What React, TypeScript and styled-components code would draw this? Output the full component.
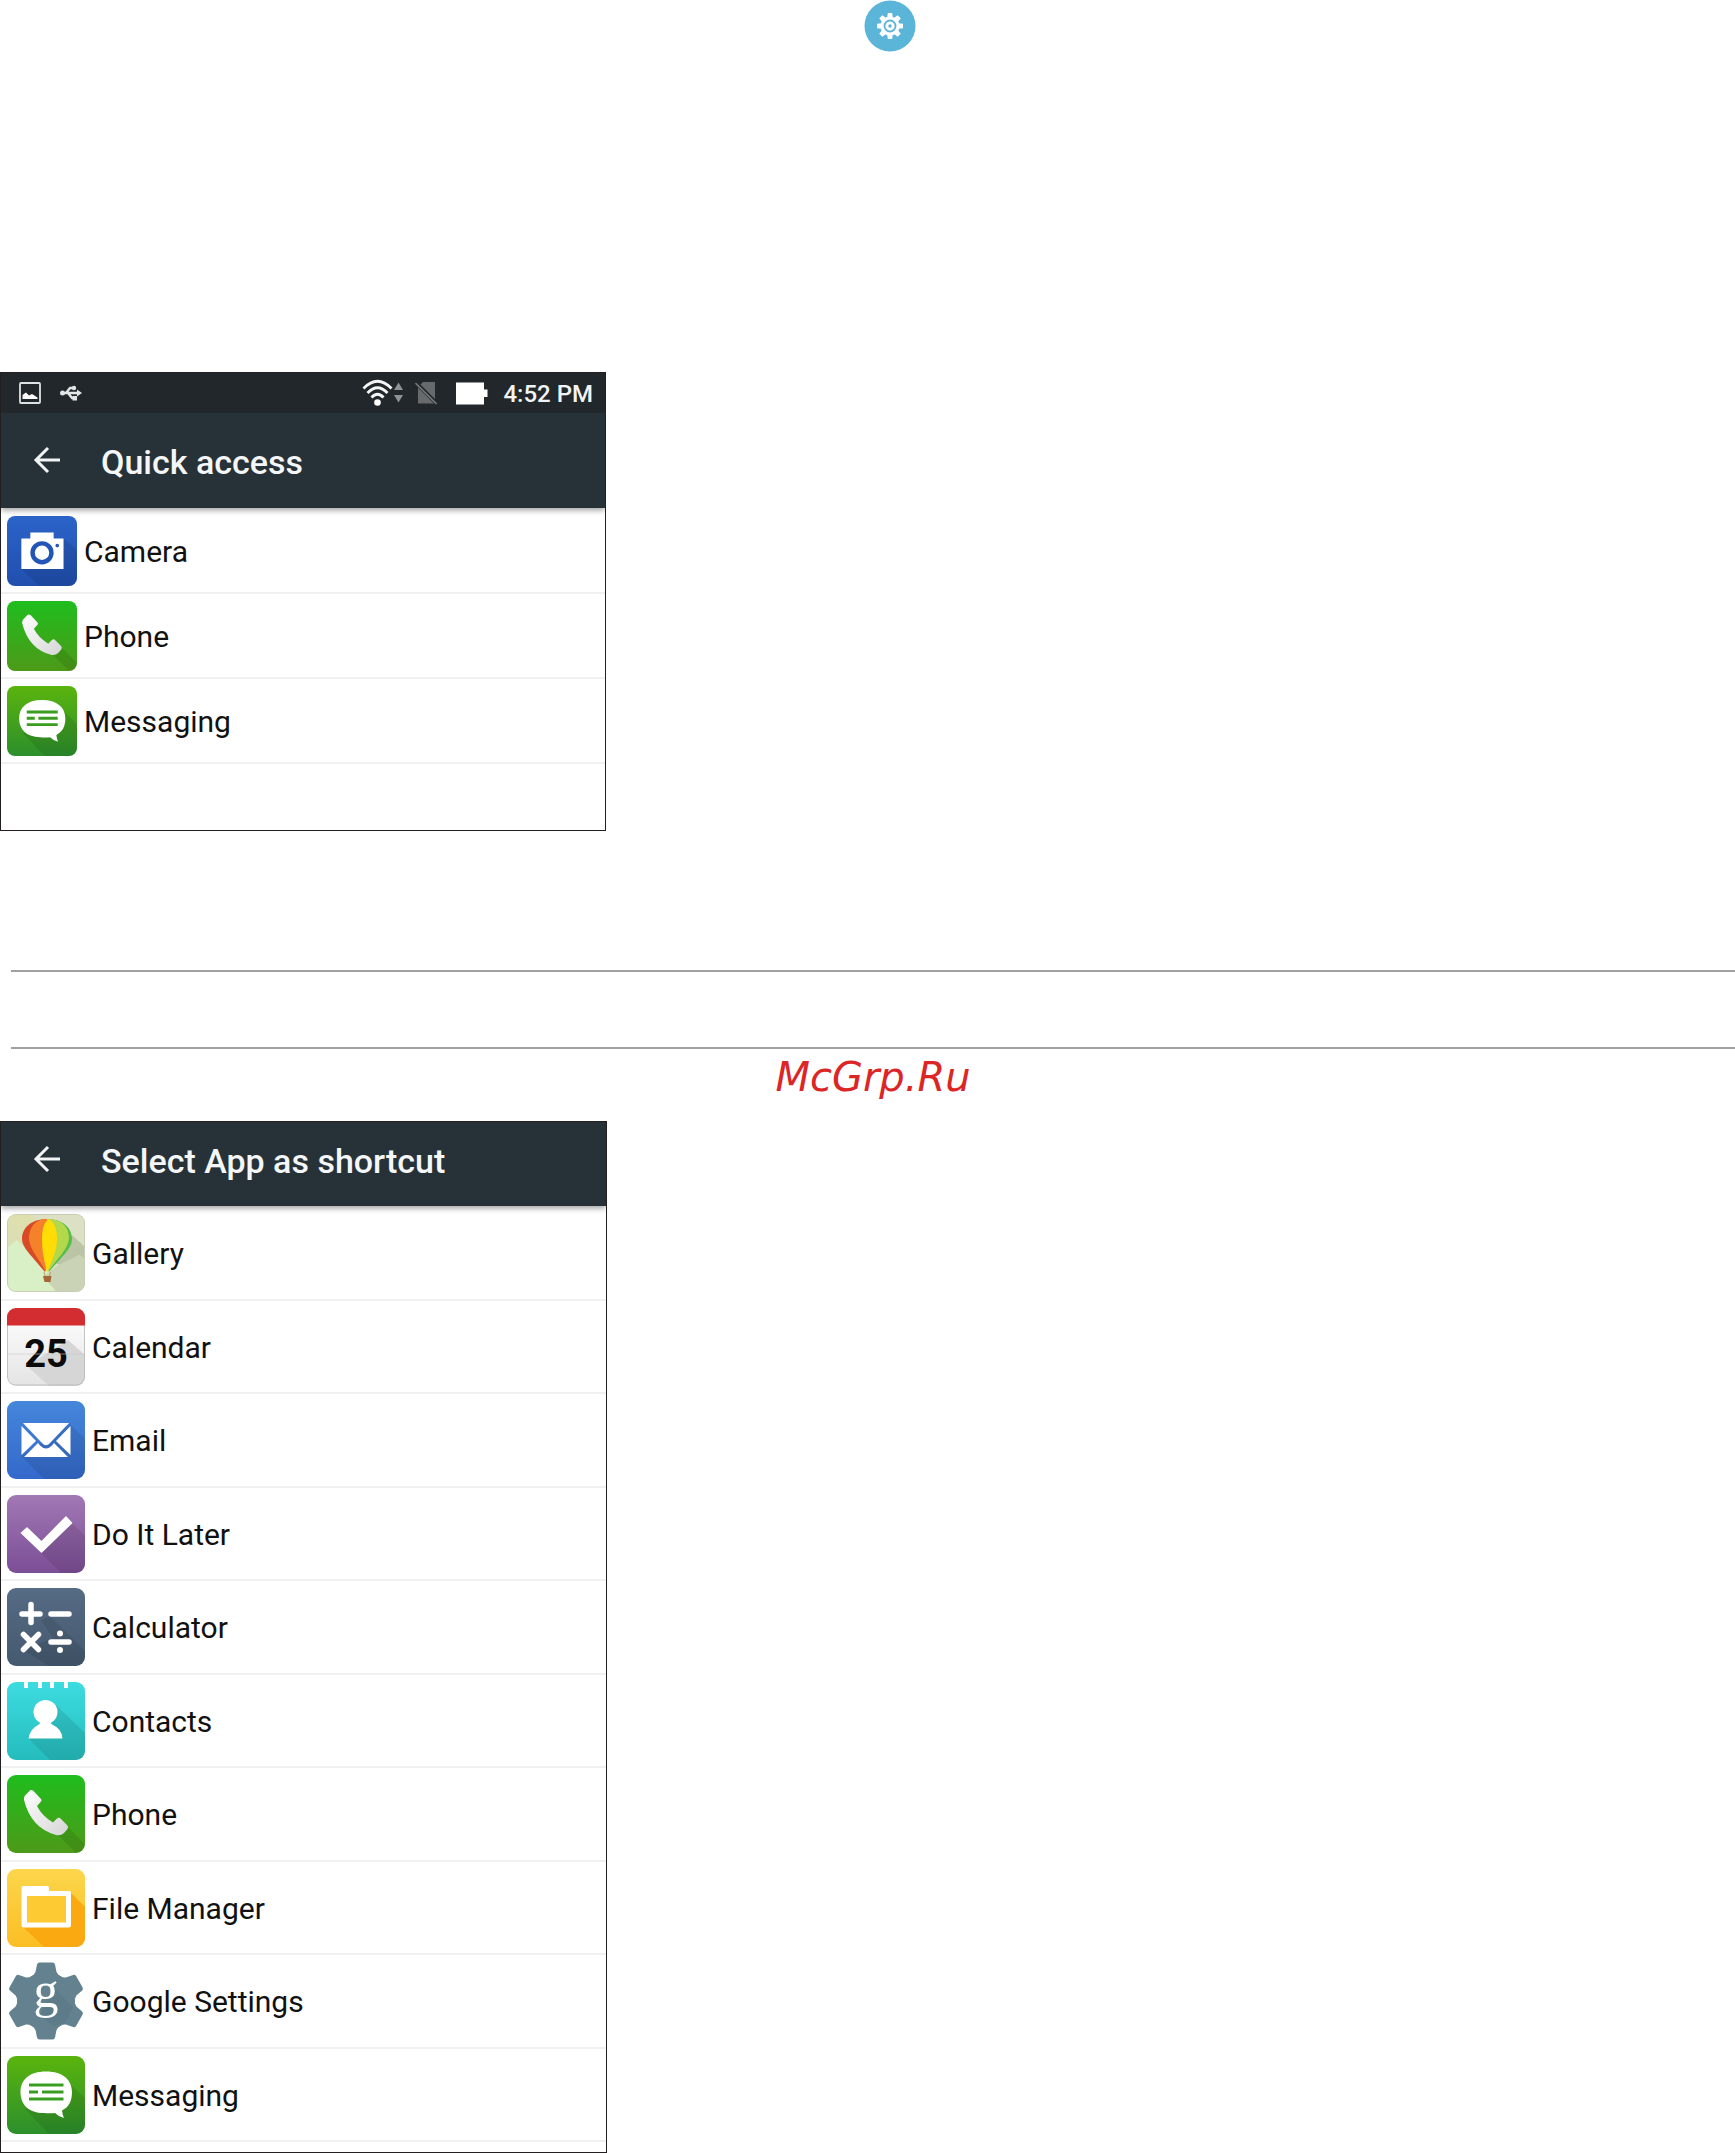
import React from 'react';
import styled, { createGlobalStyle } from 'styled-components';

const GlobalStyle = createGlobalStyle`
  *, *::before, *::after { box-sizing: border-box; }
  body {
    margin: 0;
    background: #ffffff;
    color: #111111;
    font-family: Roboto, "Noto Sans", "Liberation Sans", sans-serif;
  }
`;

const Page = styled.main`
  display: flex;
  flex-direction: column;
  width: 100%;
`;

const Hero = styled.header`
  display: flex;
  justify-content: center;
  padding: 0 0 320px 44px;

  svg { display: block; }
`;

const Screen = styled.section`
  display: flex;
  flex-direction: column;
  width: 100%;
  max-width: ${(p: { $wide?: boolean }) => (p.$wide ? 607 : 606)}px;
  border: 1px solid #231f20;
  background: #ffffff;
`;

const StatusBar = styled.div`
  display: flex;
  align-items: center;
  justify-content: space-between;
  height: 40px;
  padding: 0 12px 0 18px;
  background: #22272b;
  color: #f1f3f4;
`;

const StatusGroup = styled.div<{ $gap: number }>`
  display: flex;
  align-items: center;
  gap: ${p => p.$gap}px;

  svg { display: block; }
`;

const Signals = styled(StatusGroup)`
  margin-right: 18px;
`;

const Clock = styled.time`
  margin-left: 2px;
  padding-top: 2px;
  font-size: 24px;
  line-height: 32px;
  font-weight: 500;
`;

const Toolbar = styled.div<{ $tall?: boolean }>`
  display: flex;
  align-items: center;
  gap: 40px;
  height: ${p => (p.$tall ? 95 : 84)}px;
  padding: ${p => (p.$tall ? '3px 32px 0' : '0 32px 6px')};
  background: #273238;
  box-shadow: 0 2px 6px rgba(0, 0, 0, 0.4);
  clip-path: inset(0 0 -10px 0);
  z-index: 1;
`;

const BackButton = styled.button`
  display: flex;
  padding: 0 0 4px;
  border: 0;
  background: none;
  cursor: pointer;
`;

const Title = styled.h2`
  margin: 0;
  color: #f4f6f7;
  font-size: 34px;
  line-height: 40px;
  font-weight: 500;
`;

const AppList = styled.ul<{ $rows: string; $space: number }>`
  display: grid;
  grid-auto-rows: ${p => p.$rows};
  margin: 0;
  padding: 1px 0 ${p => p.$space}px;
  list-style: none;
`;

const AppItem = styled.li`
  display: flex;
  border-bottom: 2px solid #f1f1f1;
`;

const AppButton = styled.button`
  display: flex;
  flex: 1;
  align-items: center;
  gap: 7px;
  padding: 0 6px;
  border: 0;
  background: none;
  color: #111111;
  font-family: inherit;
  font-size: 30px;
  line-height: 36px;
  text-align: left;
  cursor: pointer;

  svg { display: block; flex: none; }
`;

const AppName = styled.span`
  padding-top: 2px;
`;

const Note = styled.section`
  display: flex;
  flex-direction: column;
  padding: 139px 0 14px 11px;
`;

const NoteBox = styled.div`
  height: 79px;
  border-top: 2px solid #a0a0a0;
  border-bottom: 2px solid #a0a0a0;
`;

const Brand = styled.p`
  margin: 6px 0 8px;
  color: #dc2626;
  font-family: "DejaVu Sans", sans-serif;
  font-size: 40px;
  line-height: 44px;
  font-style: oblique;
  text-align: center;
`;

type TileProps = { id: string; size: number; from: string; to: string; shadow?: string; children: React.ReactNode };

const Tile = ({ id, size, from, to, shadow, children }: TileProps) => (
  <svg width={size} height={size} viewBox="0 0 78 78" aria-hidden="true">
    <defs>
      <linearGradient id={id} x1="0" y1="0" x2="0" y2="1">
        <stop offset="0" stopColor={from} />
        <stop offset="1" stopColor={to} />
      </linearGradient>
      <clipPath id={`${id}-clip`}>
        <rect width="78" height="78" rx="9" />
      </clipPath>
    </defs>
    <g clipPath={`url(#${id}-clip)`}>
      <rect width="78" height="78" fill={`url(#${id})`} />
      {shadow && <path d={shadow} fill="#000000" opacity="0.09" />}
      {children}
    </g>
  </svg>
);

type IconProps = { size: number; id: string };

const CameraIcon = ({ size, id }: IconProps) => (
  <Tile id={id} size={size} from="#2b63c9" to="#214fae" shadow="M62 24L78 38V78H36L16 59Z">
    <path d="M16 25h10v-6.500h26V25h11v34H16z" fill="#fff" />
    <circle cx="39" cy="41" r="10.500" fill="#fff" stroke="#2355b6" strokeWidth="5" />
    <circle cx="56" cy="33" r="2" fill="#2355b6" />
  </Tile>
);

const PhoneIcon = ({ size, id }: IconProps) => (
  <Tile id={id} size={size} from="#1fbd1d" to="#4d9a18" shadow="M61 52L78 69V78H69L51 60Z">
    <defs>
      <linearGradient id={`${id}-h`} x1="0" y1="0" x2="1" y2="1">
        <stop offset="0" stopColor="#fff" />
        <stop offset="1" stopColor="#d5d5d5" />
      </linearGradient>
    </defs>
    <path
      d="M24 15Q25.500 15 26.500 16L34 24Q35 25.500 34 26.500L30 31Q35 41 46 47.500L50 43.500Q52 42 53.500 43.500L60 50Q62 52 60.500 54L57 58Q54 61 49 60Q24 53 17 25Q16.500 22 18 20.500L22.500 16Q23 15 24 15Z"
      fill={`url(#${id}-h)`}
    />
  </Tile>
);

const MessagingIcon = ({ size, id }: IconProps) => (
  <Tile id={id} size={size} from="#5ab40d" to="#2c8f2c" shadow="M62 27L78 42V78H42L18 53Z">
    <path d="M39 15.500C56 15.500 65 24 65 36C65 45 62 51 55 54.500Q55.500 59 57 62Q52 61 48 57Q43 57.500 37 57C22 57 13.500 49 13.500 36C13.500 24 22 15.500 39 15.500Z" fill="#fff" />
    <path d="M22 29H56.500M22 36H31M35 36H56.500M22 43H56.500" stroke="#3b9d20" strokeWidth="3.200" />
  </Tile>
);

const GalleryIcon = ({ size, id }: IconProps) => (
  <Tile id={id} size={size} from="#dfe0ad" to="#d3dcc0">
    <path d="M27 0H78V78H40Z" fill="#dce0c4" />
    <path d="M0 34L10 26L47 65V78H0Z" fill="#d9f0c6" />
    <path d="M65 21L78 33V45L72 41L56 52L45 48Z" fill="#bcc4a6" />
    <path d="M51 51L73 41L78 45V78H50L36 63Z" fill="#cbd3b7" />
    <path d="M40 5C24 5 15 14 15 25C15 34 26 43 38 58Z" fill="#d84a26" />
    <path d="M40 5C28 5 22 13 22 25C23 36 31 43 39 58Z" fill="#f5812b" />
    <path d="M40 5C56 5 65 14 65 25C65 35 54 43 42 58Z" fill="#57bd49" />
    <path d="M40 5C55 5 62 13 62 24C61 36 51 43 41 58Z" fill="#b3d84b" />
    <path d="M42 5C37 8 35 15 35 26C35 39 38 48 40 59C44 48 50 38 50 25C50 15 47 8 42 5Z" fill="#ffdc05" />
    <path d="M36 62H44.500L43.500 68H37.500Z" fill="#a46835" />
    <path d="M37 58L38 62M43.500 58L42.500 62" stroke="#ba9d67" />
    <rect x="0.500" y="0.500" width="77" height="77" rx="8" fill="none" stroke="#c8cdb8" />
  </Tile>
);

const CalendarIcon = ({ size, id }: IconProps) => (
  <Tile id={id} size={size} from="#ffffff" to="#e4e4e4">
    <path d="M61 32L78 47V78H42L20 58Z" fill="#d6d6d6" />
    <text x="39" y="58.500" textAnchor="middle" fontFamily="Roboto, sans-serif" fontSize="38" fontWeight="700" fill="#0b0b0b">25</text>
    <path d="M0 46H78" stroke="#c8c8c8" strokeOpacity="0.6" />
    <rect x="0.500" y="0" width="77" height="77" rx="8" fill="none" stroke="#b7b7b7" strokeOpacity="0.8" />
    <path d="M0 0H78V17.500H0Z" fill="#d32d31" />
  </Tile>
);

const EmailIcon = ({ size, id }: IconProps) => (
  <Tile id={id} size={size} from="#4586da" to="#3469cb" shadow="M63 23L78 38V78H37L14 55Z">
    <g fill="#fff">
      <path d="M16 22H62L43 42Q39 46.500 35 42Z" />
      <path d="M14.500 25L29 40L14.500 54Z" />
      <path d="M63.500 25L49 40L63.500 54Z" />
      <path d="M17 56L31 42L33 44.500Q39 50.500 45 44.500L47 42L61 56Z" />
    </g>
  </Tile>
);

const DoItLaterIcon = ({ size, id }: IconProps) => (
  <Tile id={id} size={size} from="#a178b4" to="#7c4e96" shadow="M65 28L78 41V78H54L34 58Z">
    <path d="M20 33L34.500 47L59 22L64.500 28L34.500 57L14.500 38Z" fill="#fff" stroke="#fff" strokeLinejoin="round" strokeWidth="1.500" />
  </Tile>
);

const CalculatorIcon = ({ size, id }: IconProps) => (
  <Tile id={id} size={size} from="#566b84" to="#455a6f" shadow="M43 28L78 63V78H42L16 62L46 50L34 32Z">
    <path
      d="M24 16.500V34.500M15 26H33M44 26H62M16.500 46.500L31.500 61.500M31.500 46.500L16.500 61.500M44 54H62"
      stroke="#fff"
      strokeWidth="5.500"
      strokeLinecap="round"
    />
    <circle cx="53" cy="45.500" r="3" fill="#fff" />
    <circle cx="53" cy="62" r="3" fill="#fff" />
  </Tile>
);

const ContactsIcon = ({ size, id }: IconProps) => (
  <Tile id={id} size={size} from="#3ddce0" to="#25bcbd" shadow="M48 22L78 51V78H43L22 57L40 44Z">
    <path d="M17 0h4v6h-4zM31 0h4v6h-4zM43 0h4v6h-4zM57 0h4v6h-4z" fill="#fff" />
    <circle cx="38.500" cy="30" r="12" fill="#fff" />
    <path d="M33 38H44Q43 42 46 43Q55 47 55.500 56.500H21.500Q23 47 31 43Q34 42 33 38Z" fill="#fff" />
  </Tile>
);

const FileManagerIcon = ({ size, id }: IconProps) => (
  <Tile id={id} size={size} from="#fcd64c" to="#fbbe24">
    <path d="M64 24L78 38V78H37L16 58Z" fill="#fba910" />
    <path
      d="M16 17H40Q42 17 42 19V22H62Q64 22 64 24V56Q64 58.500 61.500 58.500H17Q14.500 58.500 14.500 56V19Q14.500 17 16 17Z"
      fill="#fff"
    />
    <rect x="20" y="27" width="39" height="26.500" fill="#fdca34" />
  </Tile>
);

const TEETH = [0, 60, 120, 180, 240, 300];

const GoogleSettingsIcon = ({ size }: IconProps) => (
  <svg width={size} height={size} viewBox="0 0 78 78" aria-hidden="true">
    <g transform="translate(39 39)" fill="#648190">
      <circle r="28.500" />
      {TEETH.map(a => (
        <path
          key={a}
          transform={`rotate(${a})`}
          d="M-6.500 -38.500H6.500Q8.500 -38.500 9 -36.500L10.500 -29Q12 -25.500 16 -24L0 0L-16 -24Q-12 -25.500 -10.500 -29L-9 -36.500Q-8.500 -38.500 -6.500 -38.500Z"
        />
      ))}
    </g>
    <path d="M46 25L66 45L58 61L46 64L33 54Z" fill="#577583" opacity="0.5" />
    <text x="39" y="45" textAnchor="middle" fontFamily="'Liberation Serif', serif" fontSize="50" fill="#fff">g</text>
  </svg>
);

const BackArrow = () => (
  <svg width="28" height="28" viewBox="0 0 28 28" fill="none" stroke="#f1f3f4" strokeWidth="3" aria-hidden="true">
    <path d="M27 14H3M15 2L3 14L15 26" />
  </svg>
);

const SettingsBadge = () => (
  <svg width="52" height="52" viewBox="0 0 52 52" role="img" aria-label="Settings">
    <circle cx="26" cy="26" r="25.500" fill="#5ab5d8" />
    <g transform="translate(26 26)">
      {[0, 45, 90, 135, 180, 225, 270, 315].map(a => (
        <path key={a} transform={`rotate(${a})`} d="M-2.200 -13H2.200L2.800 -8H-2.800Z" fill="#fff" />
      ))}
      <circle r="9.500" fill="#fff" />
      <circle r="5.500" fill="none" stroke="#5ab5d8" strokeWidth="1.800" />
      <circle r="1.700" fill="#5ab5d8" />
    </g>
  </svg>
);

const PictureGlyph = () => (
  <svg width="22" height="22" viewBox="0 0 22 22" aria-hidden="true">
    <rect x="1" y="1" width="20" height="20" rx="1" fill="none" stroke="#dfe2e3" strokeWidth="1.800" />
    <path d="M3.500 17V13L7 10.500L10 13.500L13 12L18.500 15.500V17Z" fill="#fff" />
  </svg>
);

const UsbGlyph = () => (
  <svg width="22" height="16" viewBox="0 0 22 16" fill="none" stroke="#e3e6e7" strokeWidth="2.400" aria-hidden="true">
    <path d="M2 8H19M6 8L10 3H14M8 8L12 13H15" />
    <circle cx="2.500" cy="8" r="2.500" fill="#e3e6e7" stroke="none" />
    <path d="M17 4.500L22 8L17 11.500Z" fill="#e3e6e7" stroke="none" />
    <circle cx="14" cy="3" r="2.200" fill="#e3e6e7" stroke="none" />
    <rect x="12.500" y="11" width="4.500" height="4.500" fill="#e3e6e7" stroke="none" />
  </svg>
);

const WifiGlyph = () => (
  <svg width="42" height="28" viewBox="0 0 42 28" aria-hidden="true">
    <g fill="none" stroke="#f4f5f5" strokeWidth="2.800">
      <path d="M1.500 9.500Q15.500 -5 29.500 9.500" />
      <path d="M5.500 14Q15.500 3.500 25.500 14" />
      <path d="M9.500 18.500Q15.500 12 21.500 18.500" />
    </g>
    <circle cx="15.500" cy="23.500" r="3.300" fill="#fff" />
    <path d="M32 11L36.500 3.500L41 11ZM32 16L36.500 23.500L41 16Z" fill="#8d9295" />
  </svg>
);

const NoSimGlyph = () => (
  <svg width="22" height="24" viewBox="0 0 22 24" aria-hidden="true">
    <path d="M8 1H20V18L5.500 3.500ZM3 6.500L19 22.500H3Z" fill="#666a6d" />
    <path d="M0.500 2L21.500 23" stroke="#74787a" strokeWidth="1.600" />
  </svg>
);

const BatteryGlyph = () => (
  <svg width="33" height="23" viewBox="0 0 33 23" aria-hidden="true">
    <path d="M1 0.500H29V7.500H32.500V15H29V22.500H1Z" fill="#fff" />
  </svg>
);

type AppEntry = { name: string; Icon: (p: IconProps) => React.ReactElement };

const quickApps: AppEntry[] = [
  { name: 'Camera', Icon: CameraIcon },
  { name: 'Phone', Icon: PhoneIcon },
  { name: 'Messaging', Icon: MessagingIcon },
];

const shortcutApps: AppEntry[] = [
  { name: 'Gallery', Icon: GalleryIcon },
  { name: 'Calendar', Icon: CalendarIcon },
  { name: 'Email', Icon: EmailIcon },
  { name: 'Do It Later', Icon: DoItLaterIcon },
  { name: 'Calculator', Icon: CalculatorIcon },
  { name: 'Contacts', Icon: ContactsIcon },
  { name: 'Phone', Icon: PhoneIcon },
  { name: 'File Manager', Icon: FileManagerIcon },
  { name: 'Google Settings', Icon: GoogleSettingsIcon },
  { name: 'Messaging', Icon: MessagingIcon },
];

type AppsProps = { apps: AppEntry[]; prefix: string; iconSize: number; rows: string; space: number };

const Apps = ({ apps, prefix, iconSize, rows, space }: AppsProps) => (
  <AppList $rows={rows} $space={space}>
    {apps.map(({ name, Icon }, i) => (
      <AppItem key={name}>
        <AppButton type="button">
          <Icon size={iconSize} id={`${prefix}-${i}`} />
          <AppName>{name}</AppName>
        </AppButton>
      </AppItem>
    ))}
  </AppList>
);

export default function App() {
  return (
    <>
      <GlobalStyle />
      <Page>
        <Hero>
          <SettingsBadge />
        </Hero>

        <Screen>
          <StatusBar>
            <StatusGroup $gap={19}>
              <PictureGlyph />
              <UsbGlyph />
            </StatusGroup>
            <StatusGroup $gap={0}>
              <Signals $gap={11}>
                <WifiGlyph />
                <NoSimGlyph />
              </Signals>
              <StatusGroup $gap={13}>
                <BatteryGlyph />
                <Clock>4:52 PM</Clock>
              </StatusGroup>
            </StatusGroup>
          </StatusBar>
          <Toolbar $tall>
            <BackButton type="button" aria-label="Back">
              <BackArrow />
            </BackButton>
            <Title>Quick access</Title>
          </Toolbar>
          <Apps apps={quickApps} prefix="quick" iconSize={70} rows="85px" space={66} />
        </Screen>

        <Note>
          <NoteBox />
          <Brand>McGrp.Ru</Brand>
        </Note>

        <Screen $wide>
          <Toolbar>
            <BackButton type="button" aria-label="Back">
              <BackArrow />
            </BackButton>
            <Title>Select App as shortcut</Title>
          </Toolbar>
          <Apps apps={shortcutApps} prefix="shortcut" iconSize={78} rows="94px 93px" space={10} />
        </Screen>
      </Page>
    </>
  );
}
